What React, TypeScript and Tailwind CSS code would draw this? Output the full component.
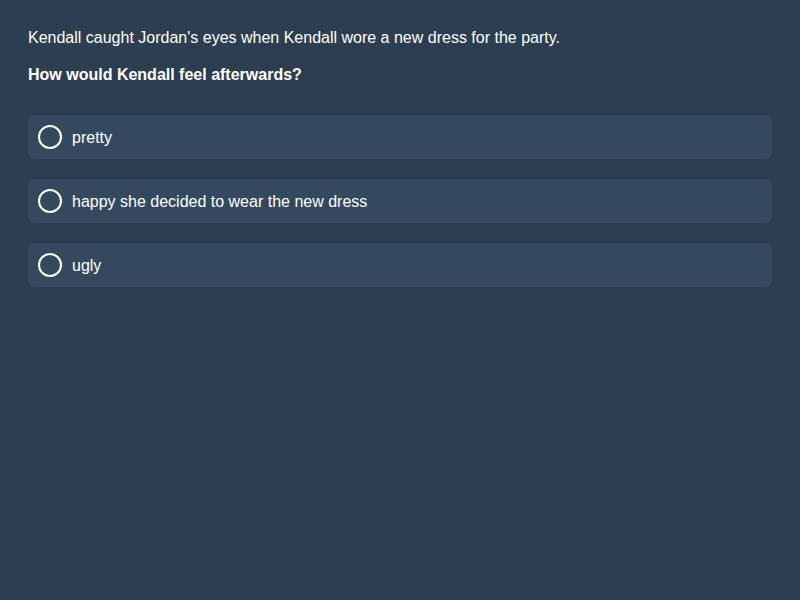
const options = ["pretty", "happy she decided to wear the new dress", "ugly"];

const App = () => {
  return (
    <div className="min-h-screen w-full bg-[#2c3e50] p-7 text-white font-['Liberation_Sans',Arial,sans-serif] text-base leading-5">
      <p>Kendall caught Jordan's eyes when Kendall wore a new dress for the party.</p>
      <p className="mt-[17px] font-bold">How would Kendall feel afterwards?</p>

      <div className="mt-[30px] flex flex-col gap-5">
        {options.map((opt) => (
          <label
            key={opt}
            className="flex h-11 items-center gap-2.5 rounded-md bg-[#34495e] px-2.5 cursor-pointer"
          >
            <span className="h-6 w-6 shrink-0 rounded-full border-2 border-white" />
            <span className="pt-0.5">{opt}</span>
          </label>
        ))}
      </div>
    </div>
  );
};

export default App;
